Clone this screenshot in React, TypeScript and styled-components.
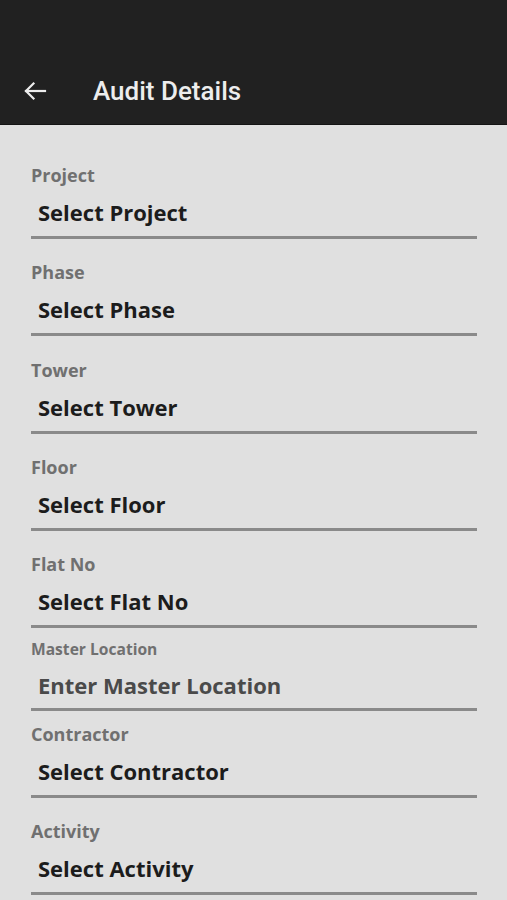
import styled, { createGlobalStyle } from 'styled-components';

const fields = [
  { label: 'Project', value: 'Select Project', gap: 39 },
  { label: 'Phase', value: 'Select Phase', gap: 22.3 },
  { label: 'Tower', value: 'Select Tower', gap: 22.3 },
  { label: 'Floor', value: 'Select Floor', gap: 22.3 },
  { label: 'Flat No', value: 'Select Flat No', gap: 22.3 },
  { label: 'Master Location', value: 'Enter Master Location', gap: 10.6, input: true },
  { label: 'Contractor', value: 'Select Contractor', gap: 12 },
  { label: 'Activity', value: 'Select Activity', gap: 22.3 },
];

const GlobalStyle = createGlobalStyle`
  html, body {
    margin: 0;
    padding: 0;
    background: #e0e0e0;
  }
  * {
    box-sizing: border-box;
  }
`;

const BackIcon = () => (
  <svg width="24" height="20" viewBox="0 0 24 20" fill="none" stroke="#ededed" strokeWidth="2.2" strokeLinecap="square">
    <line x1="3" y1="10" x2="22" y2="10" />
    <polyline points="10.5,2.5 3,10 10.5,17.5" strokeLinejoin="miter" />
  </svg>
);

const App = () => (
  <Page>
    <GlobalStyle />
    <Header>
      <Toolbar>
        <BackButton aria-label="Back">
          <BackIcon />
        </BackButton>
        <Title>Audit Details</Title>
      </Toolbar>
    </Header>
    <Form>
      {fields.map((f) => (
        <Field key={f.label} gap={f.gap}>
          <Label small={f.input}>{f.label}</Label>
          <Value input={f.input}>{f.value}</Value>
        </Field>
      ))}
    </Form>
  </Page>
);

export default App;

const Page = styled.div`
  min-height: 100vh;
  background: #e0e0e0;
  overflow: hidden;
`;

const Header = styled.header`
  height: 125px;
  background: #212121;
  padding-top: 63px;
  border-bottom: 1px solid #141414;
`;

const Toolbar = styled.div`
  height: 56px;
  display: flex;
  align-items: center;
  padding-left: 23px;
`;

const BackButton = styled.button`
  display: flex;
  align-items: center;
  justify-content: center;
  width: 24px;
  height: 24px;
  padding: 0;
  margin-right: 46px;
  background: none;
  border: none;
  cursor: pointer;
`;

const Title = styled.h1`
  margin: 0;
  font-family: Roboto, 'Noto Sans', sans-serif;
  font-size: 26px;
  font-weight: 500;
  line-height: 30px;
  color: #ededed;
`;

const Form = styled.div`
  display: flex;
  flex-direction: column;
  padding: 0 30px 0 31px;
`;

const Field = styled.div<{ gap: number }>`
  display: flex;
  flex-direction: column;
  padding-top: ${({ gap }) => gap}px;
`;

const Label = styled.span<{ small?: boolean }>`
  font-family: 'Open Sans', 'Noto Sans', sans-serif;
  font-size: ${({ small }) => (small ? '15.6px' : '18px')};
  line-height: ${({ small }) => (small ? '20px' : '22px')};
  font-weight: 700;
  color: #707070;
`;

const Value = styled.div<{ input?: boolean }>`
  margin-top: 12px;
  padding: 0 0 ${({ input }) => (input ? '9px' : '10px')} 7px;
  font-family: 'Open Sans', 'Noto Sans', sans-serif;
  font-size: 22px;
  line-height: 28px;
  font-weight: 700;
  color: ${({ input }) => (input ? '#4a4a4a' : '#1c1c1c')};
  border-bottom: 3px solid #8a8a8a;
`;
